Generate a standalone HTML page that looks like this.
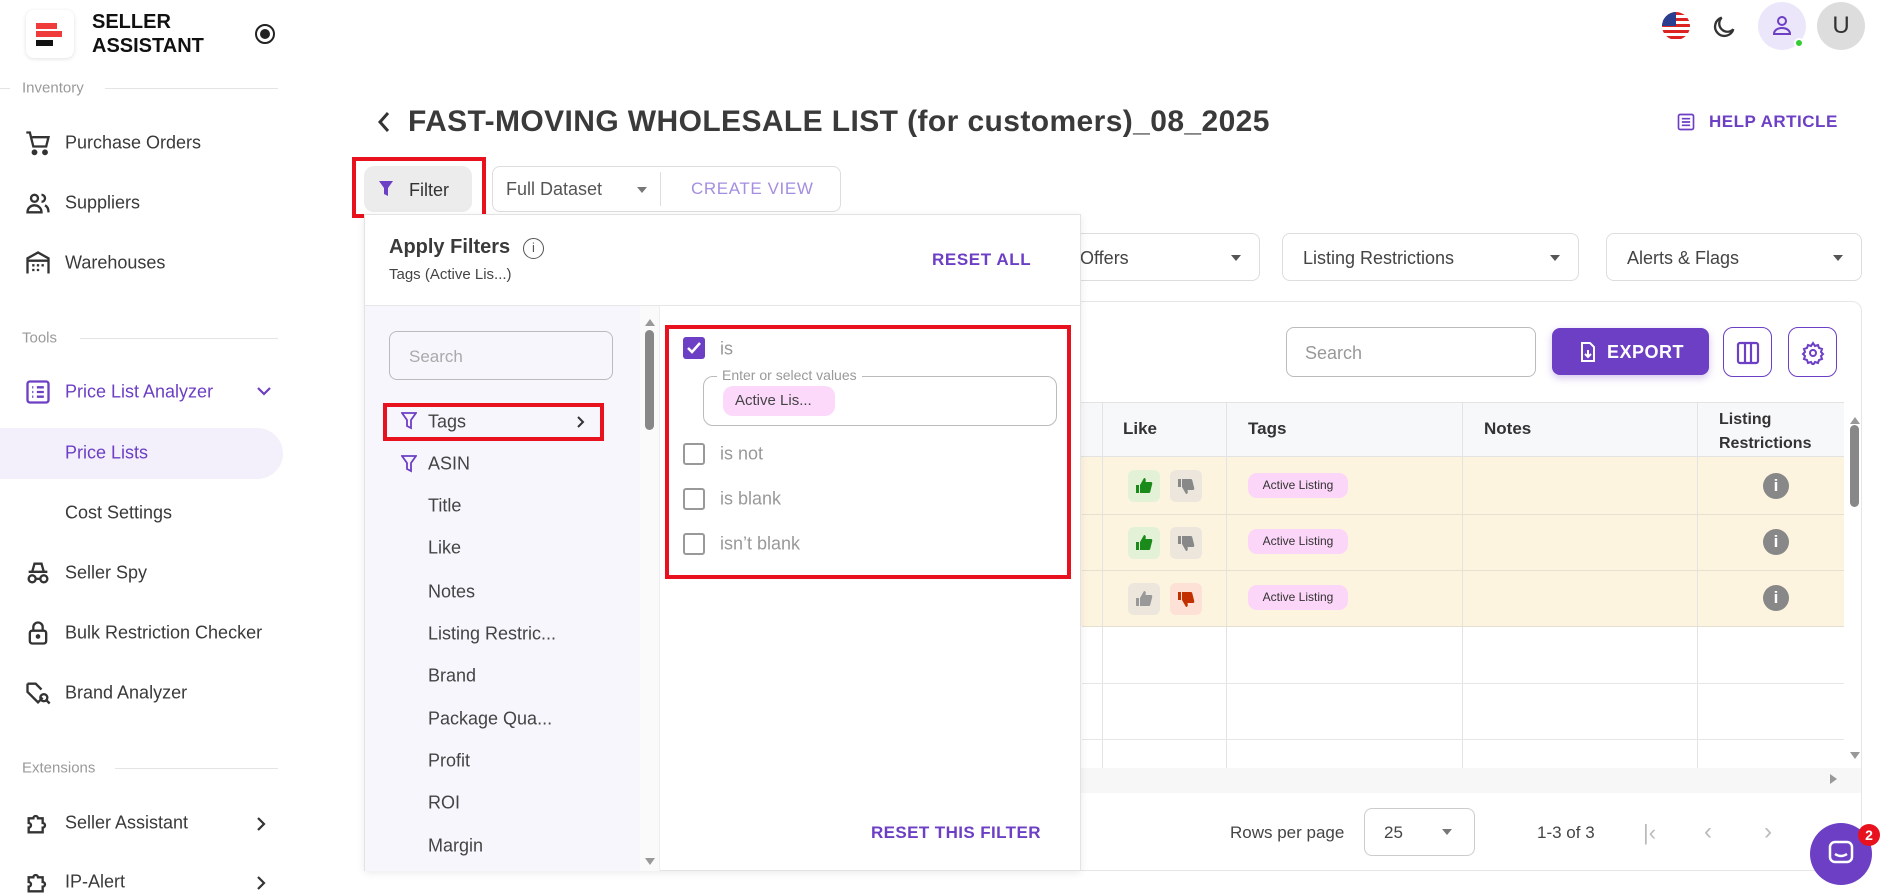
<!DOCTYPE html>
<html><head><meta charset="utf-8"><style>
*{box-sizing:border-box;margin:0;padding:0}
body{width:1883px;height:890px;overflow:hidden;background:#fff;font-family:"Liberation Sans",sans-serif;color:#333;position:relative}
.a{position:absolute}
.nav{position:absolute;left:65px;font-size:18px;color:#3a3a3a;transform:translateY(-50%)}
.ico{position:absolute;left:24px;transform:translateY(-50%)}
.sec{position:absolute;left:22px;font-size:15px;color:#9a9a9a;transform:translateY(-50%)}
.line{position:absolute;height:1px;background:#e4e4e4}
.fi{position:absolute;left:428px;font-size:18px;color:#444;transform:translateY(-50%)}
.cb{position:absolute;left:683px;width:22px;height:22px;border:2px solid #999;border-radius:3px}
.ct{position:absolute;left:720px;font-size:18px;color:#999;transform:translateY(-50%)}
.red{position:absolute;border:4px solid #e8121e}
.dd{position:absolute;top:233px;height:48px;border:1px solid #ddd;border-radius:8px;font-size:18px;color:#444;padding:14px 20px}
.dd:after{content:"";position:absolute;right:18px;top:21px;border:5px solid transparent;border-top:6px solid #555}
.vl{position:absolute;width:1px;background:#e3e3e3;top:402px;height:366px}
.hl{position:absolute;left:1082px;width:762px;height:1px;background:#e6e0d0}
.chip{position:absolute;left:1248px;width:100px;height:25px;border-radius:9px;background:#fcd6f8;font-size:12px;color:#333;text-align:center;line-height:25px}
.lk{position:absolute;width:32px;height:32px;border-radius:6px}
.lk svg{position:absolute;left:7px;top:7px}
.inf{position:absolute;left:1763px;width:26px;height:26px;border-radius:50%;background:#888;color:#fff;font-weight:bold;text-align:center;line-height:26px;font-size:17px}
</style></head><body>
<svg width="0" height="0" style="position:absolute"><defs>
<path id="up" d="M1 8h3v8H1z M5 8l4-7c2 0 2 2 1.5 4H16c1 0 1.5 1 1.2 2l-2 8c-.2.6-.7 1-1.3 1H5z"/>
<path id="dn" d="M1 2h3v8H1z M5 10l4 7c2 0 2-2 1.5-4H16c1 0 1.5-1 1.2-2l-2-8C15 2.4 14.5 2 13.9 2H5z"/>
</defs></svg>
<!-- sidebar -->
<div class="a" style="left:26px;top:10px;width:48px;height:48px;border-radius:8px;background:#fff;box-shadow:0 1px 4px rgba(0,0,0,.12)">
<div class="a" style="left:10px;top:13px;width:21px;height:6px;background:#f03b3b"></div>
<div class="a" style="left:10px;top:21px;width:26px;height:6px;background:#f03b3b"></div>
<div class="a" style="left:10px;top:30px;width:17px;height:6px;background:#111"></div></div>
<div class="a" style="left:92px;top:10px;font-size:20px;font-weight:bold;line-height:24px;color:#111">SELLER<br>ASSISTANT</div>
<div class="a" style="left:255px;top:24px;width:20px;height:20px;border:2px solid #222;border-radius:50%"><div class="a" style="left:3px;top:3px;width:10px;height:10px;border-radius:50%;background:#222"></div></div>
<div class="sec" style="top:88px">Inventory</div><div class="line" style="left:105px;top:88px;width:173px"></div>
<div class="line" style="left:0;top:88px;width:10px"></div>
<svg class="ico" style="top:143px" width="28" height="28" viewBox="0 0 24 24" fill="none" stroke="#333" stroke-width="2"><path d="M2 3h3l3 12h11l2-8H7"/><circle cx="9" cy="20" r="1.5" fill="#333"/><circle cx="18" cy="20" r="1.5" fill="#333"/></svg>
<div class="nav" style="top:143px">Purchase Orders</div>
<svg class="ico" style="top:203px" width="28" height="28" viewBox="0 0 24 24" fill="none" stroke="#333" stroke-width="2"><circle cx="9" cy="8" r="3"/><path d="M3 20c0-4 3-6 6-6s6 2 6 6z"/><path d="M15 5a3 3 0 010 6M18 14c2 1 3 3 3 6"/></svg>
<div class="nav" style="top:203px">Suppliers</div>
<svg class="ico" style="top:263px" width="28" height="28" viewBox="0 0 24 24" fill="none" stroke="#333" stroke-width="2"><path d="M3 21V8l9-5 9 5v13M3 10h18M7 14h2M11 14h2M15 14h2M7 18h2M11 18h2"/></svg>
<div class="nav" style="top:263px">Warehouses</div>
<div class="sec" style="top:338px">Tools</div><div class="line" style="left:80px;top:338px;width:198px"></div>
<svg class="ico" style="top:392px" width="28" height="28" viewBox="0 0 24 24" fill="none" stroke="#6c3fc4" stroke-width="2"><rect x="3" y="3" width="18" height="18" rx="2"/><path d="M7 8h1M7 12h1M7 16h1M11 8h6M11 12h6M11 16h6"/></svg>
<div class="nav" style="top:392px;color:#6c3fc4">Price List Analyzer</div>
<svg class="a" style="left:256px;top:385px" width="16" height="14" viewBox="0 0 16 14"><path d="M2 3l6 6 6-6" stroke="#6c3fc4" stroke-width="2.2" fill="none"/></svg>
<div class="a" style="left:0;top:428px;width:283px;height:51px;background:#f3f0fb;border-radius:0 26px 26px 0"></div>
<div class="nav" style="top:453px;color:#6c3fc4">Price Lists</div>
<div class="nav" style="top:513px">Cost Settings</div>
<svg class="ico" style="top:573px" width="28" height="28" viewBox="0 0 24 24" fill="none" stroke="#333" stroke-width="2"><path d="M4 11h16M7 11l2-7h6l2 7"/><circle cx="7" cy="17" r="3"/><circle cx="17" cy="17" r="3"/><path d="M10 17h4"/></svg>
<div class="nav" style="top:573px">Seller Spy</div>
<svg class="ico" style="top:633px" width="28" height="28" viewBox="0 0 24 24" fill="none" stroke="#333" stroke-width="2"><rect x="5" y="10" width="14" height="11" rx="2"/><path d="M8 10V7a4 4 0 018 0v3"/><circle cx="12" cy="15" r="1" fill="#333"/></svg>
<div class="nav" style="top:633px">Bulk Restriction Checker</div>
<svg class="ico" style="top:693px" width="28" height="28" viewBox="0 0 24 24" fill="none" stroke="#333" stroke-width="2"><path d="M3 4v7l9 9 4-4M3 4h7l5 5"/><circle cx="17" cy="16" r="3"/><path d="M19 18l3 3"/></svg>
<div class="nav" style="top:693px">Brand Analyzer</div>
<div class="sec" style="top:768px">Extensions</div><div class="line" style="left:115px;top:768px;width:163px"></div>
<svg class="ico" style="top:823px" width="28" height="28" viewBox="0 0 24 24" fill="none" stroke="#333" stroke-width="2"><path d="M4 8h4a2 2 0 114 0h4v4a2 2 0 110 4v4H4v-4a2 2 0 100-4z"/></svg>
<div class="nav" style="top:823px">Seller Assistant</div>
<svg class="a" style="left:255px;top:816px" width="12" height="16" viewBox="0 0 12 16"><path d="M3 2l6 6-6 6" stroke="#333" stroke-width="2.2" fill="none"/></svg>
<svg class="ico" style="top:882px" width="28" height="28" viewBox="0 0 24 24" fill="none" stroke="#333" stroke-width="2"><path d="M4 8h4a2 2 0 114 0h4v4a2 2 0 110 4v4H4v-4a2 2 0 100-4z"/></svg>
<div class="nav" style="top:882px">IP-Alert</div>
<svg class="a" style="left:255px;top:875px" width="12" height="16" viewBox="0 0 12 16"><path d="M3 2l6 6-6 6" stroke="#333" stroke-width="2.2" fill="none"/></svg>

<!-- top bar -->
<div class="a" style="left:1662px;top:12px;width:28px;height:28px;border-radius:50%;overflow:hidden;background:repeating-linear-gradient(#d22 0 3px,#fff 3px 6px)"><div class="a" style="left:0;top:0;width:14px;height:14px;background:#2a3d8f"></div></div>
<svg class="a" style="left:1710px;top:13px" width="28" height="28" viewBox="0 0 24 24" fill="none" stroke="#333" stroke-width="2"><path d="M20 14A8 8 0 1110 4a6 6 0 0010 10z"/></svg>
<div class="a" style="left:1758px;top:2px;width:48px;height:48px;border-radius:50%;background:#ece6fb"><svg class="a" style="left:12px;top:11px" width="24" height="24" viewBox="0 0 24 24" fill="none" stroke="#6c3fc4" stroke-width="2"><circle cx="12" cy="8" r="4"/><path d="M4 21c0-4 4-6 8-6s8 2 8 6z"/></svg><div class="a" style="left:36px;top:36px;width:10px;height:10px;border-radius:50%;background:#3c3;border:2px solid #fff"></div></div>
<div class="a" style="left:1817px;top:2px;width:48px;height:48px;border-radius:50%;background:#ddd;font-size:24px;text-align:center;line-height:48px;color:#333">U</div>

<!-- title -->
<svg class="a" style="left:376px;top:110px" width="16" height="24" viewBox="0 0 16 24"><path d="M12 3l-8 9 8 9" stroke="#333" stroke-width="3" fill="none"/></svg>
<div class="a" style="left:408px;top:105px;font-size:30px;font-weight:bold;color:#3a3a3a;letter-spacing:.4px">FAST-MOVING WHOLESALE LIST (for customers)_08_2025</div>
<svg class="a" style="left:1676px;top:112px" width="20" height="20" viewBox="0 0 24 24" fill="none" stroke="#6c3fc4" stroke-width="2"><rect x="3" y="3" width="18" height="18" rx="2"/><path d="M7 8h10M7 12h10M7 16h10"/></svg>
<div class="a" style="left:1709px;top:112px;font-size:17px;color:#6c3fc4;font-weight:bold;letter-spacing:.5px">HELP ARTICLE</div>

<!-- filter button -->
<div class="a" style="left:364px;top:166px;width:108px;height:46px;background:#ececec;border-radius:10px"></div>
<svg class="a" style="left:378px;top:180px" width="16" height="18" viewBox="0 0 16 18"><path d="M1 1h14l-5 7v8l-4-2V8z" fill="#6c3fc4"/></svg>
<div class="a" style="left:409px;top:180px;font-size:18px;color:#333">Filter</div>
<div class="red" style="left:352px;top:157px;width:134px;height:61px"></div>
<div class="a" style="left:492px;top:166px;width:349px;height:46px;border:1px solid #ddd;border-radius:8px"></div>
<div class="a" style="left:506px;top:179px;font-size:18px;color:#555">Full Dataset</div>
<div class="a" style="left:637px;top:187px;border:5px solid transparent;border-top:6px solid #777"></div>
<div class="a" style="left:660px;top:172px;width:1px;height:34px;background:#ddd"></div>
<div class="a" style="left:691px;top:179px;font-size:17px;color:#a48ee0;letter-spacing:.6px">CREATE VIEW</div>

<!-- dropdowns -->
<div class="dd" style="left:1060px;width:200px;border-left:none;border-radius:0 8px 8px 0">Offers</div>
<div class="dd" style="left:1282px;width:297px">Listing Restrictions</div>
<div class="dd" style="left:1606px;width:256px">Alerts &amp; Flags</div>

<!-- card -->
<div class="a" style="left:1060px;top:301px;width:802px;height:570px;border:1px solid #e6e6e6;border-radius:10px"></div>
<div class="a" style="left:1286px;top:327px;width:250px;height:50px;border:1px solid #bbb;border-radius:8px;font-size:18px;color:#999;padding:15px 18px">Search</div>
<div class="a" style="left:1552px;top:328px;width:157px;height:47px;background:#6c3fc4;border-radius:8px;box-shadow:0 3px 8px rgba(108,63,196,.3)">
<svg class="a" style="left:28px;top:13px" width="16" height="22" viewBox="0 0 16 22" fill="none" stroke="#fff" stroke-width="2"><path d="M2 2h8l4 4v14H2z M8 9v7M5 13l3 3 3-3"/></svg>
<div class="a" style="left:55px;top:14px;font-size:18px;font-weight:bold;color:#fff;letter-spacing:.5px">EXPORT</div></div>
<div class="a" style="left:1723px;top:327px;width:49px;height:50px;border:1.5px solid #6c3fc4;border-radius:10px"><svg class="a" style="left:12px;top:13px" width="24" height="24" viewBox="0 0 24 24" fill="none" stroke="#6c3fc4" stroke-width="2.2"><rect x="2" y="2" width="20" height="20" rx="2"/><path d="M9 2v20M15 2v20"/></svg></div>
<div class="a" style="left:1788px;top:327px;width:49px;height:50px;border:1.5px solid #6c3fc4;border-radius:10px"><svg class="a" style="left:12px;top:13px" width="24" height="24" viewBox="0 0 24 24" fill="none" stroke="#6c3fc4" stroke-width="2"><circle cx="12" cy="12" r="3"/><path d="M12 2l2 3 3-1 1 3 3 1-1 3 2 2-2 2 1 3-3 1-1 3-3-1-2 3-2-3-3 1-1-3-3-1 1-3-2-2 2-2-1-3 3-1 1-3 3 1z"/></svg></div>

<!-- table -->
<div class="a" style="left:1061px;top:402px;width:783px;height:55px;background:#f7f8fa;border-top:1px solid #e3e3e3;border-bottom:1px solid #e3e3e3"></div>
<div class="a" style="left:1061px;top:457px;width:783px;height:169px;background:#fdf4df"></div>
<div class="vl" style="left:1102px"></div><div class="vl" style="left:1226px"></div><div class="vl" style="left:1462px"></div><div class="vl" style="left:1697px"></div>
<div class="hl" style="top:514px"></div><div class="hl" style="top:570px"></div><div class="hl" style="top:626px"></div><div class="hl" style="top:683px;background:#e6e6e6"></div><div class="hl" style="top:739px;background:#e6e6e6"></div>
<div class="a" style="left:1123px;top:419px;font-size:17px;font-weight:bold;color:#333">Like</div>
<div class="a" style="left:1248px;top:419px;font-size:17px;font-weight:bold;color:#333">Tags</div>
<div class="a" style="left:1484px;top:419px;font-size:17px;font-weight:bold;color:#333">Notes</div>
<div class="a" style="left:1719px;top:408px;font-size:16px;font-weight:bold;color:#333;line-height:24px">Listing<br>Restrictions</div>
<!-- rows -->
<div class="lk" style="left:1128px;top:470px;background:#e3f2d6"><svg width="18" height="18" viewBox="0 0 18 18"><use href="#up" fill="#1a8a1a"/></svg></div>
<div class="lk" style="left:1170px;top:470px;background:#ece6dc"><svg width="18" height="18" viewBox="0 0 18 18"><use href="#dn" fill="#888"/></svg></div>
<div class="lk" style="left:1128px;top:527px;background:#e3f2d6"><svg width="18" height="18" viewBox="0 0 18 18"><use href="#up" fill="#1a8a1a"/></svg></div>
<div class="lk" style="left:1170px;top:527px;background:#ece6dc"><svg width="18" height="18" viewBox="0 0 18 18"><use href="#dn" fill="#888"/></svg></div>
<div class="lk" style="left:1128px;top:583px;background:#ece6dc"><svg width="18" height="18" viewBox="0 0 18 18"><use href="#up" fill="#999"/></svg></div>
<div class="lk" style="left:1170px;top:583px;background:#fde0d6"><svg width="18" height="18" viewBox="0 0 18 18"><use href="#dn" fill="#c33000"/></svg></div>
<div class="chip" style="top:473px">Active Listing</div>
<div class="chip" style="top:529px">Active Listing</div>
<div class="chip" style="top:585px">Active Listing</div>
<div class="inf" style="top:473px">i</div><div class="inf" style="top:529px">i</div><div class="inf" style="top:585px">i</div>
<!-- scrollbars -->
<div class="a" style="left:1850px;top:412px;border:5px solid transparent;border-bottom:7px solid #999"></div>
<div class="a" style="left:1850px;top:425px;width:9px;height:82px;background:#888;border-radius:5px"></div>
<div class="a" style="left:1850px;top:752px;border:5px solid transparent;border-top:7px solid #999"></div>
<div class="a" style="left:1061px;top:768px;width:800px;height:25px;background:#f7f7f7"></div>
<div class="a" style="left:1830px;top:774px;border:5px solid transparent;border-left:7px solid #999"></div>
<!-- footer -->
<div class="a" style="left:1230px;top:823px;font-size:17px;color:#444">Rows per page</div>
<div class="a" style="left:1364px;top:808px;width:111px;height:48px;border:1px solid #ccc;border-radius:8px;font-size:17px;color:#444;padding:14px 19px">25</div>
<div class="a" style="left:1442px;top:829px;border:5px solid transparent;border-top:6px solid #777"></div>
<div class="a" style="left:1537px;top:823px;font-size:17px;color:#444">1-3 of 3</div>
<div class="a" style="left:1643px;top:820px;font-size:22px;color:#bbb">|‹</div>
<div class="a" style="left:1704px;top:818px;font-size:24px;color:#bbb">‹</div>
<div class="a" style="left:1764px;top:818px;font-size:24px;color:#bbb">›</div>
<div class="a" style="left:1810px;top:823px;width:62px;height:62px;border-radius:50%;background:#6c3fc4"><svg class="a" style="left:18px;top:17px" width="26" height="28" viewBox="0 0 26 28" fill="none" stroke="#fff" stroke-width="2.5"><rect x="2" y="2" width="22" height="20" rx="5"/><path d="M7 14q6 4 12 0"/></svg></div>
<div class="a" style="left:1858px;top:824px;width:22px;height:22px;border-radius:50%;background:#e8121e;color:#fff;font-size:14px;font-weight:bold;text-align:center;line-height:22px">2</div>

<!-- filter panel -->
<div class="a" style="left:364px;top:214px;width:717px;height:657px;background:#fff;border:1px solid #e3e3e3;box-shadow:0 2px 8px rgba(0,0,0,.08)"></div>
<div class="a" style="left:365px;top:305px;width:716px;height:1px;background:#e6e6e6"></div>
<div class="a" style="left:365px;top:306px;width:275px;height:565px;background:#f7f6fc"></div>
<div class="a" style="left:640px;top:306px;width:20px;height:565px;background:#fafafa;border-right:1px solid #eee"></div>
<div class="a" style="left:645px;top:314px;border:5px solid transparent;border-bottom:7px solid #999"></div>
<div class="a" style="left:645px;top:330px;width:9px;height:100px;background:#888;border-radius:5px"></div>
<div class="a" style="left:645px;top:858px;border:5px solid transparent;border-top:7px solid #999"></div>
<div class="a" style="left:389px;top:236px;font-size:20px;font-weight:bold;color:#3a3a3a">Apply Filters</div>
<div class="a" style="left:523px;top:238px;width:21px;height:21px;border:1.5px solid #555;border-radius:50%;font-size:13px;text-align:center;line-height:18px;color:#555">i</div>
<div class="a" style="left:389px;top:266px;font-size:15px;color:#444">Tags (Active Lis...)</div>
<div class="a" style="left:932px;top:250px;font-size:17px;color:#6c3fc4;font-weight:bold;letter-spacing:.6px">RESET ALL</div>
<div class="a" style="left:389px;top:331px;width:224px;height:49px;border:1px solid #bbb;border-radius:8px;font-size:17px;color:#aaa;padding:15px 19px">Search</div>
<svg class="a" style="left:401px;top:412px" width="16" height="18" viewBox="0 0 16 18"><path d="M1 1h14l-5 7v8l-4-2V8z" fill="none" stroke="#6c3fc4" stroke-width="1.8"/></svg>
<div class="fi" style="top:422px">Tags</div>
<svg class="a" style="left:576px;top:415px" width="10" height="14" viewBox="0 0 10 14"><path d="M2 2l5 5-5 5" stroke="#333" stroke-width="2" fill="none"/></svg>
<div class="red" style="left:383px;top:403px;width:221px;height:38px"></div>
<svg class="a" style="left:401px;top:455px" width="16" height="18" viewBox="0 0 16 18"><path d="M1 1h14l-5 7v8l-4-2V8z" fill="none" stroke="#6c3fc4" stroke-width="1.8"/></svg>
<div class="fi" style="top:464px">ASIN</div>
<div class="fi" style="top:506px">Title</div>
<div class="fi" style="top:548px">Like</div>
<div class="fi" style="top:592px">Notes</div>
<div class="fi" style="top:634px">Listing Restric...</div>
<div class="fi" style="top:676px">Brand</div>
<div class="fi" style="top:719px">Package Qua...</div>
<div class="fi" style="top:761px">Profit</div>
<div class="fi" style="top:803px">ROI</div>
<div class="fi" style="top:846px">Margin</div>
<!-- right pane -->
<div class="a" style="left:683px;top:337px;width:22px;height:22px;background:#6c3fc4;border-radius:3px"><svg class="a" style="left:3px;top:4px" width="16" height="14" viewBox="0 0 16 14"><path d="M2 7l4 4 8-9" stroke="#fff" stroke-width="2.5" fill="none"/></svg></div>
<div class="ct" style="top:349px">is</div>
<div class="a" style="left:703px;top:376px;width:354px;height:50px;border:1px solid #bbb;border-radius:10px"></div>
<div class="a" style="left:717px;top:367px;padding:0 5px;background:#fff;font-size:14px;color:#999">Enter or select values</div>
<div class="a" style="left:723px;top:386px;width:112px;height:30px;border-radius:10px;background:#fcd9fb;font-size:15px;color:#444;line-height:30px;padding-left:12px">Active Lis...</div>
<div class="cb" style="top:443px"></div><div class="ct" style="top:454px">is not</div>
<div class="cb" style="top:488px"></div><div class="ct" style="top:499px">is blank</div>
<div class="cb" style="top:533px"></div><div class="ct" style="top:544px">isn’t blank</div>
<div class="red" style="left:665px;top:325px;width:406px;height:254px"></div>
<div class="a" style="left:871px;top:823px;font-size:17px;color:#6c3fc4;font-weight:bold;letter-spacing:.4px">RESET THIS FILTER</div>
</body></html>
